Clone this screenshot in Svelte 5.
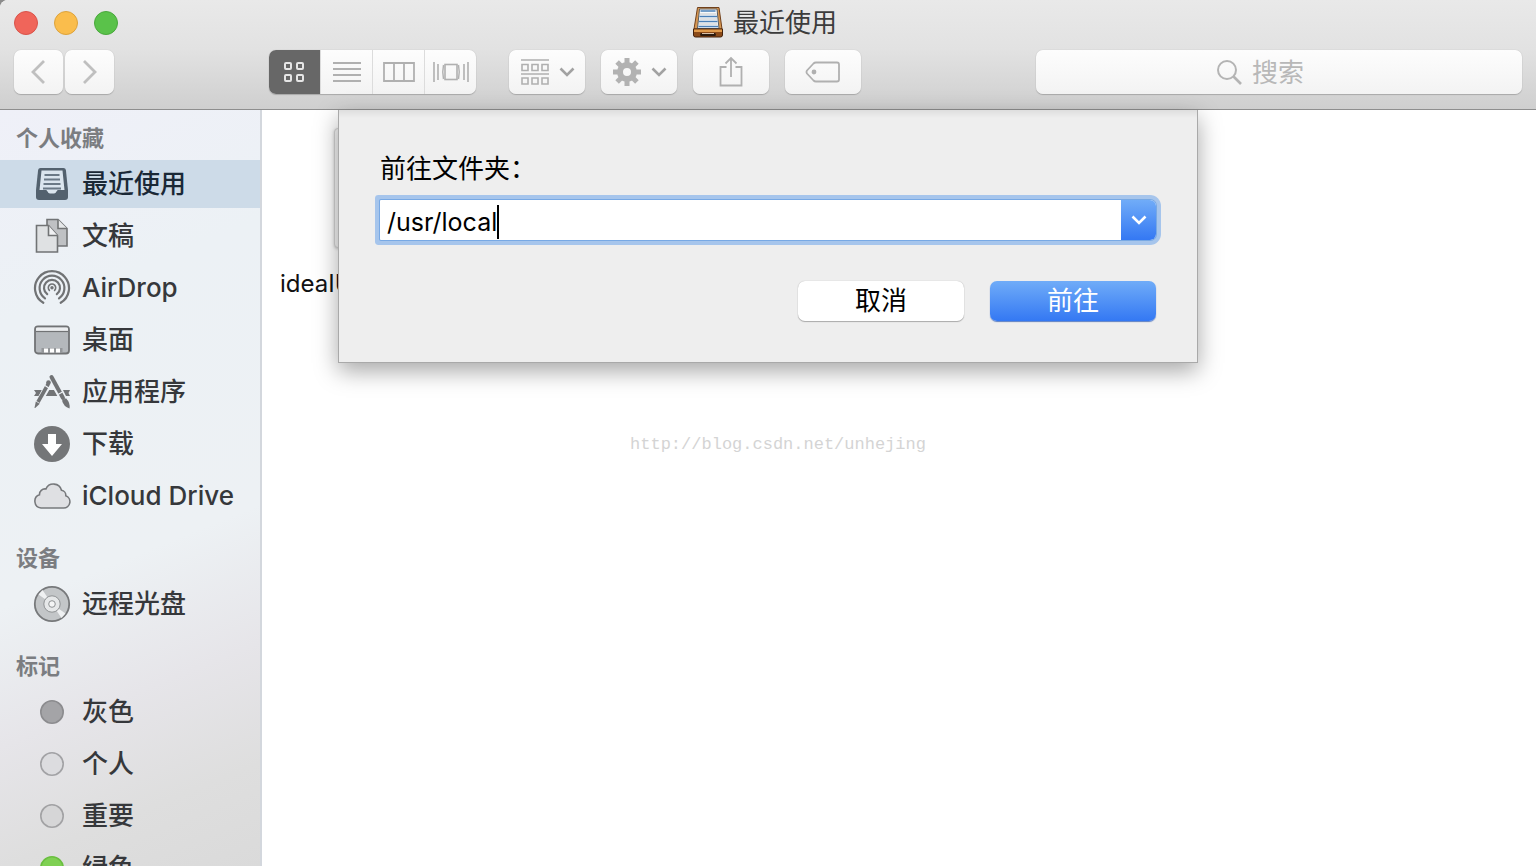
<script>
    let folder = $state('/usr/local');
    let search = $state('');
    let view = $state('icon');
    let current = $state('recent');

    const views = [
        { id: 'icon', title: '图标' },
        { id: 'list', title: '列表' },
        { id: 'column', title: '分栏' },
        { id: 'flow', title: 'Cover Flow' },
    ];

    const sections = [
        {
            title: '个人收藏',
            items: [
                { id: 'recent', label: '最近使用' },
                { id: 'docs', label: '文稿' },
                { id: 'airdrop', label: 'AirDrop' },
                { id: 'desktop', label: '桌面' },
                { id: 'apps', label: '应用程序' },
                { id: 'downloads', label: '下载' },
                { id: 'icloud', label: 'iCloud Drive' },
            ],
        },
        {
            title: '设备',
            items: [{ id: 'disc', label: '远程光盘' }],
        },
        {
            title: '标记',
            items: [
                { id: 'gray', label: '灰色', fill: '#a4a4a7', stroke: '#8c8c8f' },
                { id: 'personal', label: '个人', fill: '#dcdcdf', stroke: '#a2a2a5' },
                { id: 'important', label: '重要', fill: '#d6d6d7', stroke: '#a2a2a4' },
                { id: 'green', label: '绿色', fill: '#7fd053', stroke: '#6abf40' },
            ],
        },
    ];
</script>

{#snippet chevron()}
    <svg class="chevron" width="16" height="10" viewBox="0 0 16 10">
        <path d="M1.5 1.5 8 8l6.5-6.5" fill="none" stroke="currentColor" stroke-width="2.6" />
    </svg>
{/snippet}

{#snippet viewIcon(id)}
    <svg width="38" height="24" viewBox="0 0 38 24" fill="none" stroke="currentColor">
        {#if id === 'icon'}
            <g stroke-width="2">
                <rect x="9" y="3" width="6" height="6" rx="1" />
                <rect x="21" y="3" width="6" height="6" rx="1" />
                <rect x="9" y="15" width="6" height="6" rx="1" />
                <rect x="21" y="15" width="6" height="6" rx="1" />
            </g>
        {:else if id === 'list'}
            <path d="M5 3h28M5 9h28M5 15h28M5 21h28" stroke-width="1.8" />
        {:else if id === 'column'}
            <path d="M4 3h30v18H4zM14 3v18M24 3v18" stroke-width="1.8" />
        {:else}
            <rect x="13" y="4.5" width="12" height="15" stroke-width="1.6" />
            <path d="M2 2v20M36 2v20" stroke-width="1.6" />
            <path d="M6 4v16M32 4v16" stroke-width="1.6" />
            <path d="M11.500 5q-1.500 7 0 14M26.500 5q1.500 7 0 14" stroke-width="1.4" />
        {/if}
    </svg>
{/snippet}

{#snippet sideIcon(item)}
    <svg class="icon" width="38" height="38" viewBox="0 0 38 38" fill="none">
        {#if item.fill}
            <circle cx="19" cy="19" r="11.2" fill={item.fill} stroke={item.stroke} stroke-width="1.6" />
        {:else if item.id === 'recent'}
            <path d="M7.500 3h23q2 0 2.400 2l2.100 20v7q0 3-3 3H6q-3 0-3-3v-7L5.100 5q.4-2 2.400-2z" fill="#53616e" />
            <path d="M8.500 5.500h21L31.500 25h-6.500q-1 0-1.500 1.500-.8 2-2.500 2h-4q-1.700 0-2.500-2-.5-1.500-1.500-1.500H6.500z" fill="#dbe5ee" />
            <path d="M11.500 10h15M11 14.500h16M10.500 19h17M10 23.500h18" stroke="#6b7986" stroke-width="1.8" />
        {:else if item.id === 'docs'}
            <path d="M14 2.500h11l9 9V29H14z" fill="#bfc1c4" stroke="#717375" stroke-width="1.6" />
            <path d="M25 2.500v9h9" fill="#e6e8ea" stroke="#717375" stroke-width="1.6" />
            <path d="M3.500 8.500h12l9 10V35h-21z" fill="#dfe1e3" stroke="#717375" stroke-width="1.6" />
            <path d="M15.500 8.500v10h9" fill="#f0f1f3" stroke="#717375" stroke-width="1.6" />
        {:else if item.id === 'airdrop'}
            <g stroke="#717375" stroke-width="2.2" stroke-linecap="round">
                <path d="M10.300 33.800a17 17 0 1 1 17.400 0" />
                <path d="M12 29.300a12.400 12.400 0 1 1 14 0" />
                <path d="M14.200 25.200a8 8 0 1 1 9.600 0" />
                <path d="M16.400 21.400a3.700 3.700 0 1 1 5.200 0" stroke-width="1.6" />
            </g>
            <circle cx="19" cy="18.800" r="1.700" fill="#717375" />
        {:else if item.id === 'desktop'}
            <rect x="2" y="5.500" width="34" height="27" rx="3" fill="#b4b8bc" stroke="#717375" stroke-width="1.8" />
            <path d="M3 7.500q0-1 1-1h30q1 0 1 1V10H3z" fill="#eceef0" />
            <path d="M3 10.500h32" stroke="#717375" stroke-width="1.2" />
            <path d="M8.500 27h21v5h-21z" fill="#94979a" />
            <path d="M11 27.500h4v4h-4zM17 27.500h4v4h-4zM23 27.500h4v4h-4z" fill="#fff" />
        {:else if item.id === 'apps'}
            <path d="M1 17h8l-3 6H1l2-3zM30 17h7l-1.500 3 1.500 3h-4zM15 17h8l4 6H11z" fill="#717375" />
            <path d="M18.500 6 33 32M16 11 4 32" stroke="#edf1f5" stroke-width="6.500" />
            <path d="M18.500 4 30 25" stroke="#717375" stroke-width="4" stroke-linecap="round" />
            <path d="M15.500 10.500 5 29" stroke="#717375" stroke-width="3.600" />
            <circle cx="15.500" cy="9.500" r="2.300" fill="#717375" />
            <path d="M29 27.500l4-2.200q4.500 4.700 3.500 10.200-6-2-7.500-8z" fill="#717375" />
            <path d="M2.800 28.500l4 2.200-4.600 4.300H1.500z" fill="#717375" />
            <path d="M12 12.500l4.500 3M25 21.500l4.500-2.500" stroke="#edf1f5" stroke-width="1.2" />
        {:else if item.id === 'downloads'}
            <circle cx="19" cy="19" r="18" fill="#747678" />
            <path d="M15 9h8v10h6L19 31 9 19h6z" fill="#fff" />
        {:else if item.id === 'icloud'}
            <path
                d="M8 31h22.500a6.300 6.300 0 0 0 2.300-12.200 5.200 5.200 0 0 0-4.300-5.600 8.300 8.300 0 0 0-15.600-1.200 5.400 5.400 0 0 0-6.400 5.800A6.800 6.800 0 0 0 8 31z"
                fill="#dfe0e3"
                stroke="#77797c"
                stroke-width="1.6"
            />
        {:else}
            <circle cx="19" cy="19" r="17.200" fill="#c3c6c8" stroke="#77797b" stroke-width="1.8" />
            <path d="M19 19 5.500 9.500l4-4.500zM19 19l13.500 9.500-4 4.500z" fill="#eff1f2" />
            <circle cx="19" cy="19" r="8.200" fill="#e6e8e9" stroke="#8f9294" />
            <circle cx="19" cy="19" r="3.300" fill="#f4f5f5" stroke="#8f9294" />
        {/if}
    </svg>
{/snippet}

<div class="window">
    <header>
        <div class="titlebar">
            <div class="lights">
                <button class="light red" aria-label="关闭"></button>
                <button class="light yellow" aria-label="最小化"></button>
                <button class="light green" aria-label="缩放"></button>
            </div>
            <h1>
                <svg width="30" height="34" viewBox="0 0 30 34">
                    <path d="M4.500 1.500h21.500L29 23H1z" fill="#d79752" stroke="#70401b" />
                    <path d="M6.500 3h17.500L26 22.500H4.500z" fill="#f7f9fa" stroke="#5a5d60" />
                    <path d="M7.500 5h15M6.500 10.500h17.500M6 15.500h18.500M5.500 20.500h19.500" stroke="#4a80b8" stroke-width="1.5" />
                    <path d="M7 8h16.500M6.500 13h17.500M6 18h18.500" stroke="#c4c8cc" />
                    <path d="M.500 23h29v6q0 2-2 2h-25q-2 0-2-2z" fill="#8b4a18" stroke="#42210b" />
                    <path d="M1 23.500h28v2.500H1z" fill="#e09a4b" />
                    <rect x="7" y="27" width="16" height="3" rx="1.5" fill="#2c1a0e" />
                    <path d="M9 27.500h12" stroke="#d8c0a8" />
                </svg>
                最近使用
            </h1>
        </div>

        <div class="toolbar">
            <div class="nav">
                <button class="tool" aria-label="后退">
                    <svg width="18" height="26" viewBox="0 0 18 26">
                        <path d="M14 2 3 13l11 11" fill="none" stroke="#bfbfbf" stroke-width="2.8" />
                    </svg>
                </button>
                <button class="tool" aria-label="前进">
                    <svg width="18" height="26" viewBox="0 0 18 26">
                        <path d="M3 2l11 11L3 24" fill="none" stroke="#bfbfbf" stroke-width="2.8" />
                    </svg>
                </button>
            </div>

            <div class="views">
                {#each views as v (v.id)}
                    <button class:active={view === v.id} aria-label={v.title} onclick={() => (view = v.id)}>
                        {@render viewIcon(v.id)}
                    </button>
                {/each}
            </div>

            <div class="actions">
                <button class="tool" aria-label="排列">
                    <svg width="32" height="28" viewBox="0 0 32 28" fill="none" stroke="#b0b0b0" stroke-width="1.6">
                        <path d="M2 2h28M2 16h28" />
                        <path d="M3 6.500h6v6H3zM13 6.500h6v6h-6zM23 6.500h6v6h-6zM3 20h6v6H3zM13 20h6v6h-6zM23 20h6v6h-6z" />
                    </svg>
                    {@render chevron()}
                </button>
                <button class="tool" aria-label="操作">
                    <svg width="32" height="28" viewBox="0 0 32 28">
                        <circle cx="16" cy="14" r="7" fill="none" stroke="#b2b2b2" stroke-width="6" />
                        <g stroke="#b2b2b2" stroke-width="5">
                            <path d="M16 0v6M16 22v6M2 14h6M24 14h6" />
                            <path d="M6.100 4.100l4 4M21.900 19.900l4 4M6.100 23.900l4-4M21.900 8.100l4-4" />
                        </g>
                    </svg>
                    {@render chevron()}
                </button>
                <button class="tool" aria-label="共享">
                    <svg width="26" height="32" viewBox="0 0 26 32" fill="none" stroke="#b0b0b0" stroke-width="1.8">
                        <path d="M8.500 11H2.500v18.500h21V11h-6M13 2v19M7.500 7.500 13 2l5.500 5.500" />
                    </svg>
                </button>
                <button class="tool" aria-label="编辑标记">
                    <svg width="36" height="22" viewBox="0 0 36 22" fill="none" stroke="#b0b0b0" stroke-width="1.8">
                        <path d="M11 1.500h21q2 0 2 2v15q0 2-2 2H11q-1.500 0-2.500-1L2 12.500q-1-1.500 0-3l6.500-7q1-1 2.500-1z" />
                        <circle cx="9" cy="11" r="1.5" fill="#b0b0b0" />
                    </svg>
                </button>
            </div>

            <label class="search">
                <svg width="26" height="26" viewBox="0 0 26 26" fill="none" stroke="#b4b4b4">
                    <circle cx="11" cy="11" r="9" stroke-width="2" />
                    <path d="M17.500 17.500l7.500 7.500" stroke-width="2.6" />
                </svg>
                <input type="text" placeholder="搜索" aria-label="搜索" bind:value={search} />
            </label>
        </div>
    </header>

    <div class="body">
        <nav class="sidebar">
            {#each sections as section (section.title)}
                <section>
                    <h2>{section.title}</h2>
                    <ul>
                        {#each section.items as item (item.id)}
                            <li>
                                <button class:selected={current === item.id} onclick={() => (current = item.id)}>
                                    {@render sideIcon(item)}
                                    {item.label}
                                </button>
                            </li>
                        {/each}
                    </ul>
                </section>
            {/each}
        </nav>

        <main>
            <figure>
                <div class="thumb"></div>
                <figcaption>ideaIU</figcaption>
            </figure>
            <p class="watermark">http://blog.csdn.net/unhejing</p>
        </main>

        <form class="sheet" onsubmit={(e) => e.preventDefault()}>
            <label for="folder">前往文件夹：</label>
            <div class="combo">
                <input id="folder" type="text" bind:value={folder} />
                <span class="caret"></span>
                <button type="button" class="drop" aria-label="显示历史">
                    {@render chevron()}
                </button>
            </div>
            <div class="buttons">
                <button type="button">取消</button>
                <button type="submit" class="primary">前往</button>
            </div>
        </form>
    </div>
</div>

<style>
    :global(body) {
        background: #8c8c8c;
    }

    .window {
        display: flex;
        flex-direction: column;
        height: 100vh;
        overflow: hidden;
        border-top-left-radius: 8px;
        background: #fff;
        color: #36383b;
        font-family: Inter, 'Noto Sans CJK SC', sans-serif;
        font-size: 26px;
    }

    button,
    input {
        box-sizing: border-box;
        margin: 0;
        padding: 0;
        border: none;
        background: none;
        color: inherit;
        font: inherit;
    }

    svg {
        flex: none;
        display: block;
    }

    /* header */
    header {
        flex: none;
        border-bottom: 1px solid #8e8e8e;
        background: linear-gradient(#e9e9e9, #e2e2e2 45%, #cfcfcf);
    }

    .titlebar {
        display: grid;
        grid-template-columns: 1fr auto 1fr;
        align-items: center;
        height: 44px;
        padding: 0 20px 0 14px;
    }

    .lights {
        display: flex;
        gap: 16px;
    }

    .light {
        width: 24px;
        height: 24px;
        border-radius: 50%;
        border: 1px solid #d9534a;
        background: #f0655a;
    }

    .light.yellow {
        border-color: #dda33c;
        background: #fabd4c;
    }

    .light.green {
        border-color: #49a83c;
        background: #5ac24a;
    }

    h1 {
        display: flex;
        align-items: center;
        gap: 10px;
        margin: 0;
        font-size: 26px;
        font-weight: 400;
        line-height: 46px;
        color: #3c3c3c;
    }

    .toolbar {
        display: flex;
        align-items: center;
        padding: 6px 14px 15px;
    }

    .nav {
        display: flex;
        gap: 2px;
        margin-right: 155px;
    }

    .tool,
    .views,
    .search {
        height: 44px;
        border-radius: 7px;
        background: linear-gradient(#fdfdfd, #f3f3f3);
        box-shadow: 0 1px 1px #a8a8a8, 0 0 1px #b0b0b0;
    }

    .tool {
        display: flex;
        align-items: center;
        justify-content: center;
        gap: 8px;
        width: 76px;
        color: #a2a2a2;
    }

    .nav .tool {
        width: 49px;
    }

    .views {
        display: flex;
        overflow: hidden;
        margin-right: 33px;
    }

    .views button {
        display: flex;
        align-items: center;
        justify-content: center;
        width: 52px;
        color: #b0b0b0;
        border-left: 1px solid #dcdcdc;
    }

    .views button:first-child {
        width: 51px;
        border-left: none;
    }

    .views button.active {
        background: #676767;
        color: #e6e6e6;
    }

    .actions {
        display: flex;
        gap: 16px;
    }

    .search {
        display: flex;
        align-items: center;
        justify-content: center;
        gap: 10px;
        width: 486px;
        margin-left: auto;
    }

    .search input {
        width: 90px;
        outline: none;
    }

    .search input::placeholder {
        color: #b8b8b8;
        opacity: 1;
    }

    /* sidebar */
    .body {
        position: relative;
        display: flex;
        flex: 1;
        min-height: 0;
    }

    .sidebar {
        flex: none;
        box-sizing: border-box;
        width: 262px;
        padding-top: 6px;
        overflow: hidden;
        border-right: 2px solid #d3d7dd;
        background: linear-gradient(158deg, #eff0f8, #ecf1f5 25%, #edf1f4 58%, #e6e5e9 74%, #dedede 88%, #dadada);
    }

    section {
        margin-bottom: 16px;
    }

    h2 {
        margin: 0;
        padding-left: 16px;
        font-size: 22px;
        font-weight: 600;
        line-height: 44px;
        color: #7b7d81;
    }

    ul {
        display: flex;
        flex-direction: column;
        gap: 4px;
        margin: 0;
        padding: 0;
        list-style: none;
    }

    li button {
        display: flex;
        align-items: center;
        gap: 11px;
        width: 100%;
        height: 48px;
        padding-left: 33px;
        font-size: 26px;
        font-weight: 500;
        line-height: 48px;
        text-align: left;
    }

    li button.selected {
        background: #cddbe8;
        color: #1a2836;
    }

    /* files */
    main {
        flex: 1;
        display: flex;
        flex-direction: column;
        padding: 18px;
    }

    figure {
        margin: 0;
        color: #111;
        font-size: 24px;
    }

    .thumb {
        box-sizing: border-box;
        width: 120px;
        height: 120px;
        margin: 0 0 20px 54px;
        border: 1px solid #d2d2d2;
        border-radius: 4px;
        background: #f4f4f4;
        box-shadow: 0 1px 3px #ccc;
    }

    figcaption {
        line-height: 32px;
    }

    .watermark {
        margin: 132px 242px 0 0;
        font-family: 'Liberation Mono', monospace;
        font-size: 17px;
        line-height: 26px;
        text-align: center;
        color: #d4d4d4;
    }

    /* dialog */
    .sheet {
        position: absolute;
        top: 0;
        left: 50%;
        box-sizing: border-box;
        width: 860px;
        padding: 41px;
        transform: translateX(-50%);
        border: 1px solid #a9a9a9;
        border-top: none;
        background: linear-gradient(#dedede, #eee 8px);
        box-shadow: 0 8px 22px rgba(0, 0, 0, 0.35);
        color: #000;
    }

    .sheet label {
        display: block;
        margin-bottom: 13px;
        line-height: 36px;
    }

    .combo {
        display: flex;
        align-items: center;
        height: 40px;
        margin-bottom: 41px;
        padding-left: 7px;
        border-radius: 1px 6px 6px 1px;
        background: #fff;
        box-shadow: 0 0 0 1px #78a9e4, 0 0 0 5px #a6c5ec;
    }

    .combo input {
        field-sizing: content;
        height: 40px;
        padding-top: 4px;
        font-size: 25px;
        outline: none;
    }

    .caret {
        width: 2px;
        height: 34px;
        margin-top: 4px;
        background: #000;
    }

    .drop {
        display: flex;
        align-items: center;
        justify-content: center;
        width: 35px;
        height: 40px;
        margin-left: auto;
        border-radius: 0 6px 6px 0;
        background: linear-gradient(#70acf8, #3478f3);
        color: #fff;
    }

    .buttons {
        display: flex;
        justify-content: flex-end;
        gap: 26px;
    }

    .buttons button {
        width: 166px;
        height: 40px;
        border-radius: 7px;
        background: #fff;
        box-shadow: 0 0 1px #aaa, 0 1px 1px #aaa;
        line-height: 40px;
    }

    .buttons .primary {
        background: linear-gradient(#70acf8, #3478f3);
        box-shadow: 0 1px 1px #5b7fc4;
        color: #fff;
    }
</style>
